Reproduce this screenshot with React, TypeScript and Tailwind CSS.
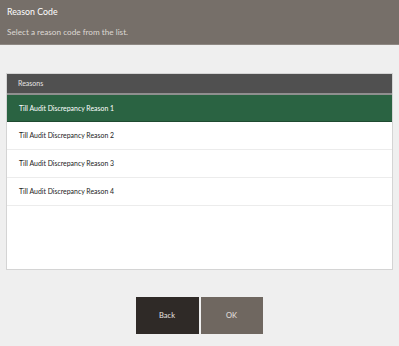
export default function App() {
  const reasons = [
    "Till Audit Discrepancy Reason 1",
    "Till Audit Discrepancy Reason 2",
    "Till Audit Discrepancy Reason 3",
    "Till Audit Discrepancy Reason 4",
  ];

  return (
    <div
      className="w-[399px] h-[346px] bg-[#efefef] flex flex-col"
      style={{ fontFamily: 'Lato, "Liberation Sans", sans-serif' }}
    >
      <div className="h-[45px] bg-[#766f69] border-b border-[#8e8883] px-[7px] pt-[6px] text-white">
        <p className="text-[8.8px] leading-[12px]">Reason Code</p>
        <p className="text-[8.2px] leading-[11px] mt-[9px] text-[#ddd8d3]">
          Select a reason code from the list.
        </p>
      </div>

      <div className="mx-[6px] mt-[28px] h-[197px] bg-white border border-[#d4d4d4] flex flex-col">
        <div className="h-[21px] bg-[#505050] border-b-2 border-[#8f8f8f] px-[11px] flex items-center text-[7px] text-[#e4e4e4]">
          Reasons
        </div>
        {reasons.map((r, i) => (
          <div
            key={r}
            className={
              i === 0
                ? "h-[27px] bg-[#2a6342] border-b border-[#1f4a31] px-[12px] flex items-center text-[6.9px] text-white"
                : "h-[28px] border-b border-[#ececec] px-[12px] flex items-center text-[6.9px] text-[#222]"
            }
          >
            {r}
          </div>
        ))}
      </div>

      <div className="mt-[27px] flex justify-center gap-[2px] pr-[1px]">
        <button className="w-[63px] h-[37px] bg-[#2f2a27] text-[7.5px] text-[#e8e4e0]">
          Back
        </button>
        <button className="w-[62px] h-[37px] bg-[#6f6760] text-[7.5px] text-[#e8e4e0]">
          OK
        </button>
      </div>
    </div>
  );
}
